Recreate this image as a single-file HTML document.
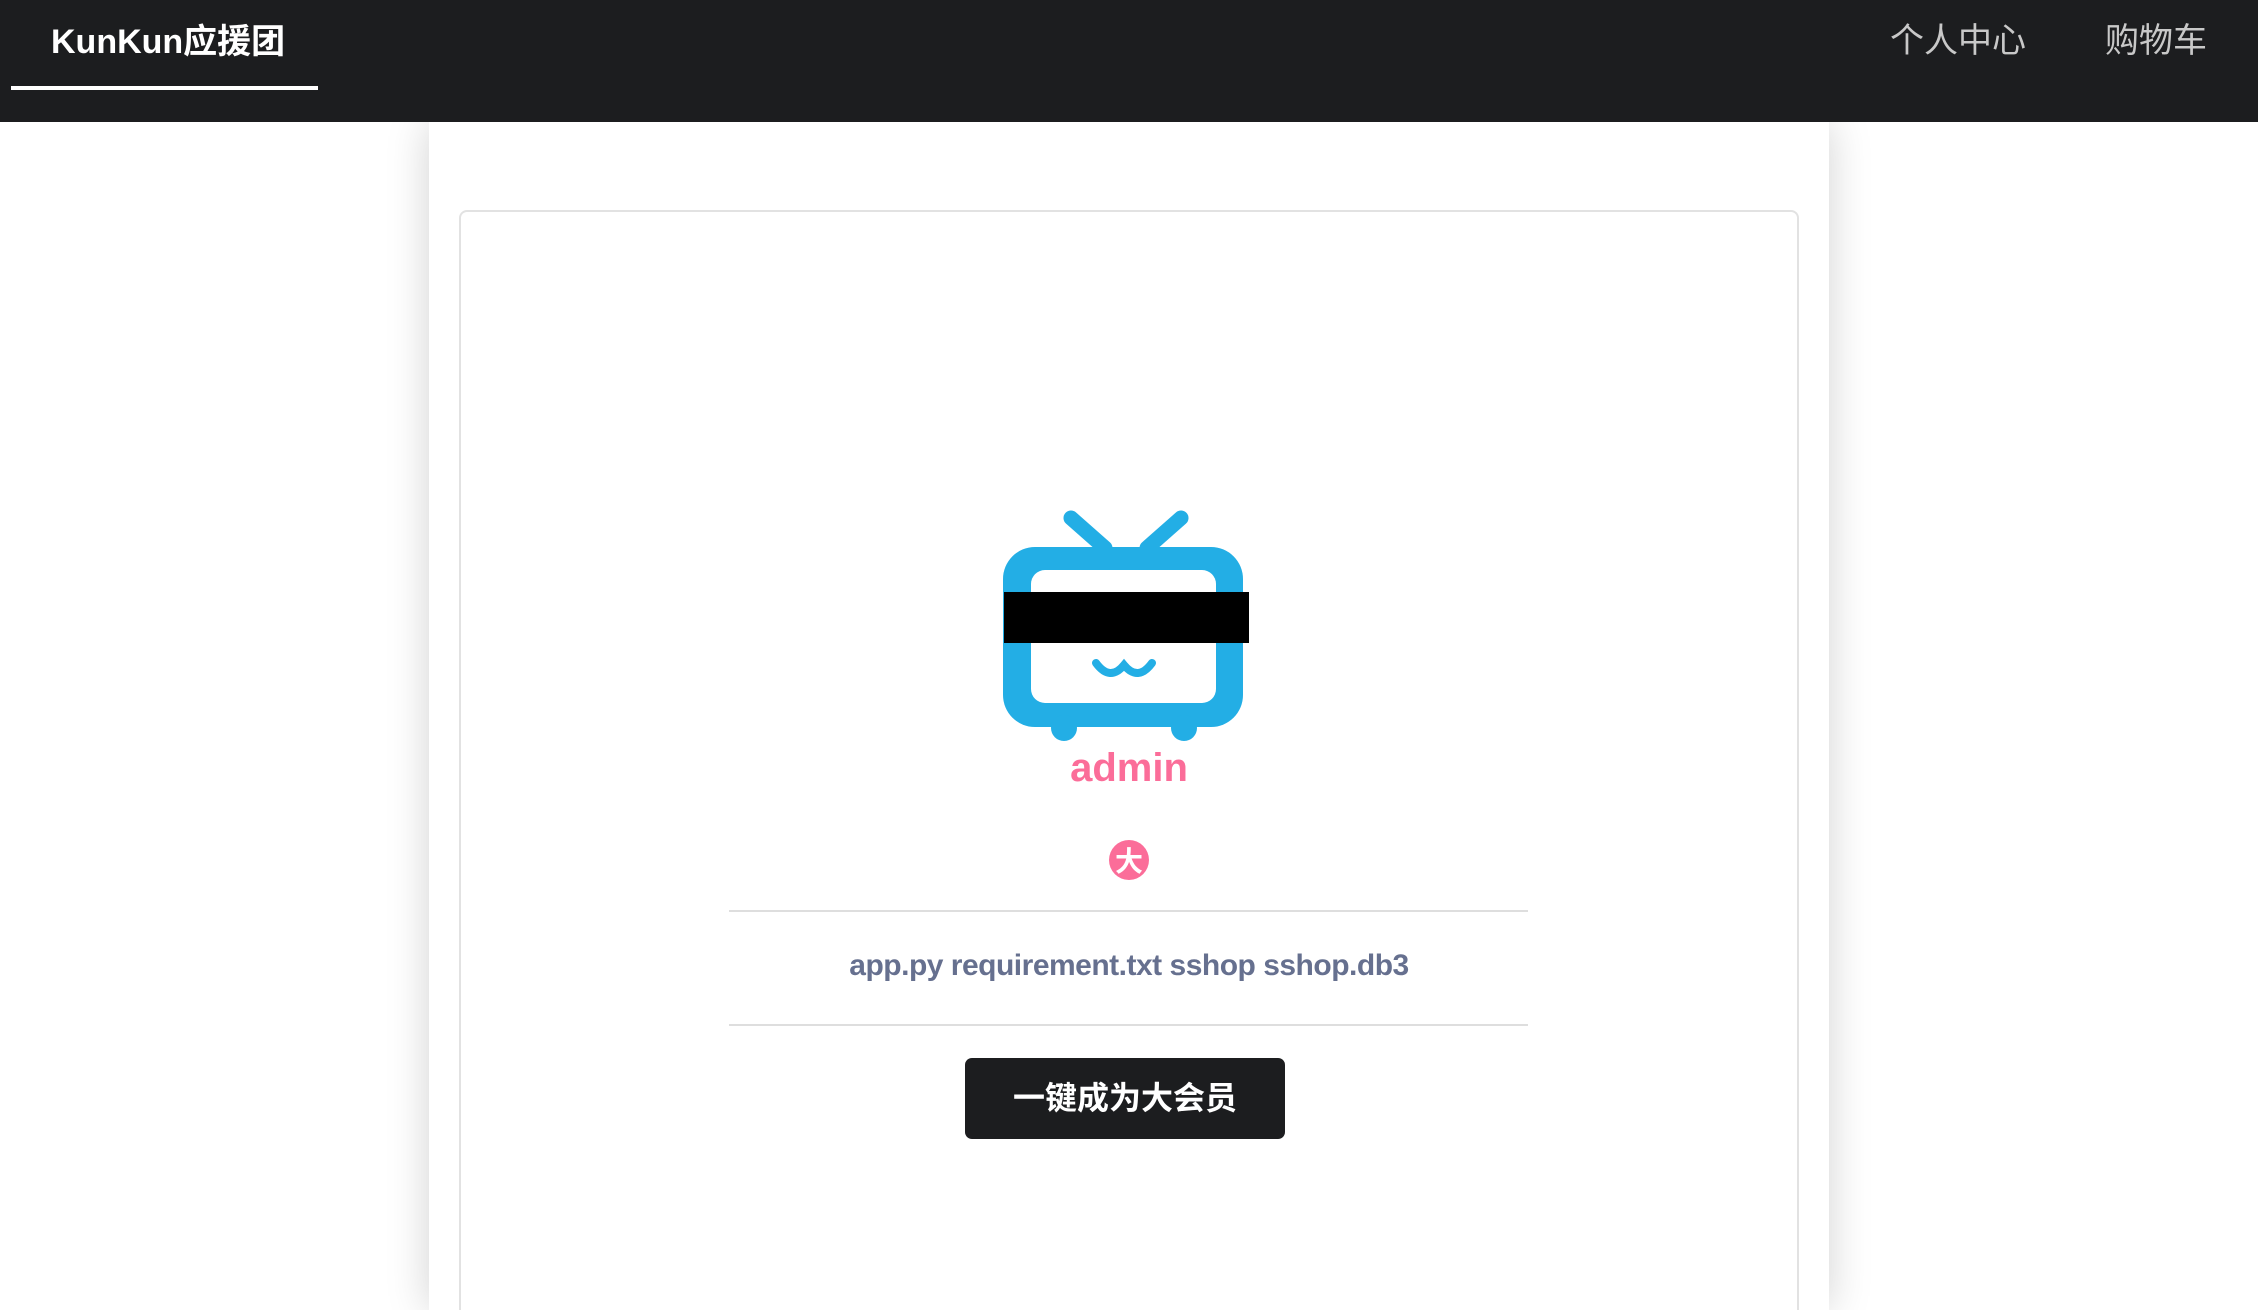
<!DOCTYPE html>
<html style="overflow:hidden;width:2258px;height:1310px"><head><meta charset="utf-8"><style>
*{margin:0;padding:0;box-sizing:border-box}
body{width:2258px;height:1310px;overflow:hidden;background:#fff;font-family:"Liberation Sans","Noto Sans CJK SC",sans-serif}
.wrap{position:relative;width:2258px;height:1310px;overflow:hidden}
.hdr{position:absolute;left:0;top:0;width:2258px;height:122px;background:#1c1d1f;z-index:2}
.title{position:absolute;left:51px;top:14px;font-size:34px;font-weight:bold;color:#fff}
.ul{position:absolute;left:11px;top:86px;width:307px;height:4px;background:#fff}
.nav{position:absolute;top:13px;font-size:34px;color:#c8c8c8}
.cont{position:absolute;left:429px;top:122px;width:1400px;height:1188px;background:#fff;box-shadow:0 0 40px rgba(0,0,0,.18)}
.card{position:absolute;left:459px;top:210px;width:1340px;height:1100px;border:2px solid #e2e2e2;border-bottom:none;border-radius:8px 8px 0 0}
.line{position:absolute;left:729px;width:799px;height:2px;background:#dedede}
.txt{position:absolute;left:0;width:2258px;text-align:center;top:949px;font-size:30px;font-weight:bold;color:#66708f;letter-spacing:-0.5px}
.admin{position:absolute;left:0;width:2258px;text-align:center;top:746px;font-size:40px;font-weight:bold;color:#fb6d99}
.btn{position:absolute;left:965px;top:1058px;width:320px;height:81px;background:#1c1d1f;border-radius:7px;color:#fff;font-size:32px;font-weight:bold;text-align:center;line-height:81px}
</style></head><body><div class="wrap">
<div class="hdr">
<div class="title">KunKun应援团</div>
<div class="ul"></div>
<div class="nav" style="left:1890px">个人中心</div>
<div class="nav" style="left:2105px">购物车</div>
</div>
<div class="cont"></div>
<div class="card"></div>
<svg style="position:absolute;left:0;top:0" width="2258" height="1310">
<g stroke="#23aee5" stroke-linecap="round" stroke-width="15" fill="none">
<line x1="1071" y1="518" x2="1105" y2="548"/>
<line x1="1181" y1="518" x2="1147" y2="548"/>
</g>
<rect x="1003" y="547" width="240" height="180" rx="32" fill="#23aee5"/>
<rect x="1031" y="570" width="185" height="133" rx="14" fill="#fff"/>
<circle cx="1064" cy="728" r="13" fill="#23aee5"/>
<circle cx="1184" cy="728" r="13" fill="#23aee5"/>
<path d="M1096 663 Q1110 682 1124 665 Q1138 682 1152 663" stroke="#23aee5" stroke-width="8" fill="none" stroke-linecap="round"/>
<rect x="1004" y="592" width="245" height="51" fill="#000"/>
<circle cx="1129" cy="860" r="20" fill="#fb6d99"/>
<text x="1129" y="871" font-size="28" font-weight="bold" fill="#fff" text-anchor="middle" font-family="Noto Sans CJK SC,sans-serif">大</text>
</svg>
<div class="admin">admin</div>
<div class="line" style="top:910px"></div>
<div class="txt">app.py requirement.txt sshop sshop.db3</div>
<div class="line" style="top:1024px"></div>
<div class="btn">一键成为大会员</div>
</div></body></html>
